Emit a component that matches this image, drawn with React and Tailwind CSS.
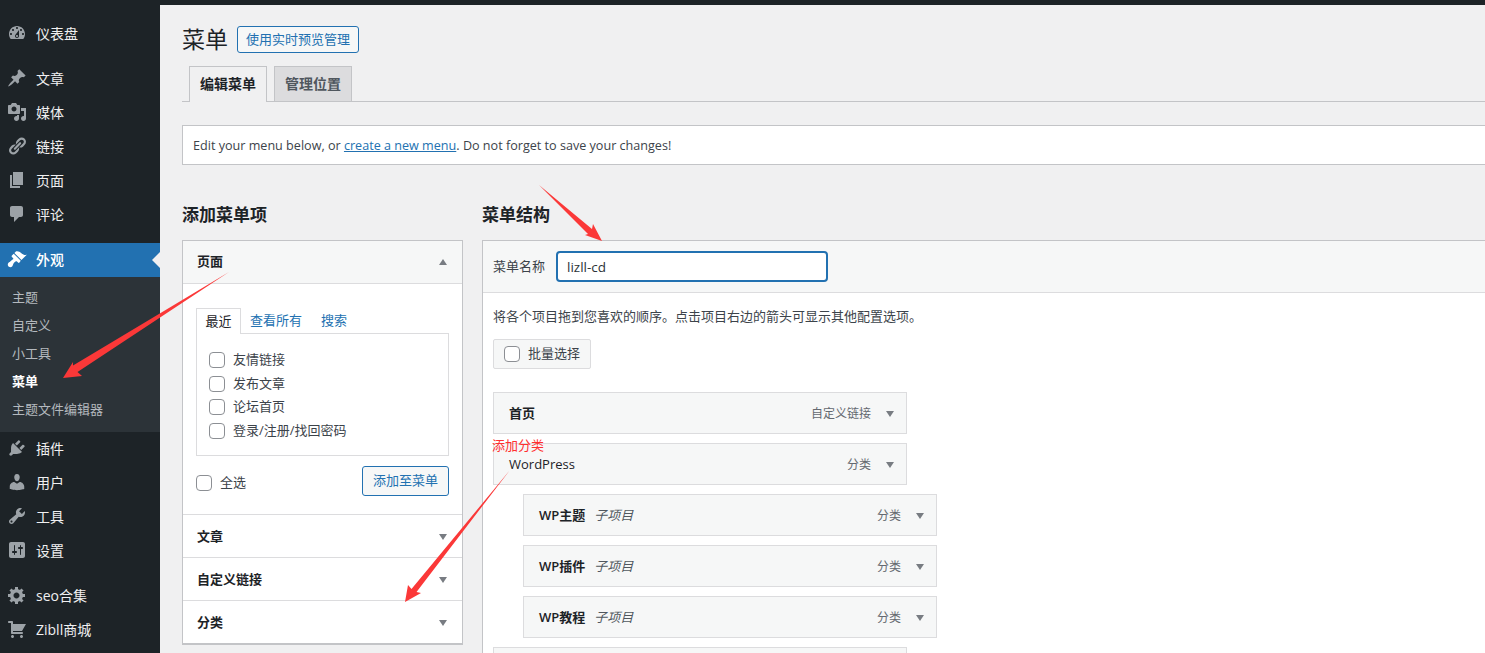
import React from 'react';

const icons = {
  dashboard: 'M3.76 16h12.48c1.1-1.37 1.76-3.11 1.76-5 0-4.42-3.58-8-8-8s-8 3.58-8 8c0 1.89.66 3.63 1.76 5zM10 4c.55 0 1 .45 1 1s-.45 1-1 1-1-.45-1-1 .45-1 1-1zM6 6c.55 0 1 .45 1 1s-.45 1-1 1-1-.45-1-1 .45-1 1-1zm8 0c.55 0 1 .45 1 1s-.45 1-1 1-1-.45-1-1 .45-1 1-1zm-5.37 5.55L12 7v6c0 1.1-.9 2-2 2s-2-.9-2-2c0-.57.24-1.08.63-1.45zM4 10c.55 0 1 .45 1 1s-.45 1-1 1-1-.45-1-1 .45-1 1-1zm12 0c.55 0 1 .45 1 1s-.45 1-1 1-1-.45-1-1 .45-1 1-1zm-5 3c0-.55-.45-1-1-1s-1 .45-1 1 .45 1 1 1 1-.45 1-1z',
  post: 'M10.44 3.02l1.82-1.82 6.36 6.35-1.83 1.82c-1.05-.68-2.48-.57-3.41.36l-.75.75c-.92.93-1.04 2.35-.35 3.41l-1.83 1.82-2.41-2.41-2.8 2.79c-.42.42-3.38 2.71-3.8 2.29s1.86-3.39 2.28-3.81l2.79-2.79L4.1 9.36l1.83-1.82c1.05.69 2.48.57 3.4-.36l.75-.75c.93-.92 1.05-2.35.36-3.41z',
  media: 'M13 11V4c0-.55-.45-1-1-1h-1.67L9 1H5L3.67 3H2c-.55 0-1 .45-1 1v7c0 .55.45 1 1 1h10c.55 0 1-.45 1-1zM7 4.5c1.38 0 2.5 1.12 2.5 2.5S8.38 9.5 7 9.5 4.5 8.38 4.5 7 5.62 4.5 7 4.5zM14 6h5v10.5c0 1.38-1.12 2.5-2.5 2.5S14 17.88 14 16.5s1.12-2.5 2.5-2.5c.17 0 .34.02.5.05V9h-3V6zm-4 8.05V13h2v3.5c0 1.38-1.12 2.5-2.5 2.5S7 17.88 7 16.5 8.12 14 9.5 14c.17 0 .34.02.5.05z',
  links: 'M17.74 2.76c1.68 1.69 1.68 4.41 0 6.1l-1.53 1.52c-1.12 1.12-2.7 1.47-4.14 1.09l2.62-2.61.76-.77.76-.76c.84-.84.84-2.2 0-3.04-.84-.85-2.2-.85-3.04 0l-.77.76-3.38 3.38c-.37-1.44-.02-3.02 1.1-4.14l1.52-1.53c1.69-1.68 4.42-1.68 6.1 0zM8.59 13.43l5.34-5.34c.42-.42.42-1.1 0-1.52-.44-.43-1.13-.39-1.53 0l-5.33 5.34c-.42.42-.42 1.1 0 1.52.44.43 1.13.39 1.52 0zm-.76 2.29l4.14-4.15c.38 1.44.03 3.02-1.09 4.14l-1.52 1.53c-1.69 1.68-4.41 1.68-6.1 0-1.68-1.68-1.68-4.42 0-6.1l1.53-1.52c1.12-1.12 2.7-1.47 4.14-1.1l-4.14 4.15c-.85.84-.85 2.2 0 3.05.84.84 2.2.84 3.04 0z',
  page: 'M6 15V2h10v13H6zm-1 1h8v2H3V5h2v11z',
  comments: 'M5 2h9c1.1 0 2 .9 2 2v7c0 1.1-.9 2-2 2h-2l-5 5v-5H5c-1.1 0-2-.9-2-2V4c0-1.1.9-2 2-2z',
  appearance: 'M14.48 11.06L7.41 3.99l1.5-1.5c.5-.56 2.3-.47 3.51.32 1.21.8 1.43 1.28 2.91 2.1 1.18.64 2.45 1.26 4.45.85zm-.71.71L6.7 4.7 4.93 6.47c-.39.39-.39 1.02 0 1.41l1.06 1.06c.39.39.39 1.03 0 1.42-.6.6-1.43 1.11-2.21 1.69-.35.26-.7.53-1.01.84C1.43 13.23.4 14.87.94 16.5c.5 1.5 2.83 2.36 4.14 1.06.58-.58 1.08-2.55 1.59-3.33.48-.73 1.1-1.38 1.9-1.8.45-.24.99-.3 1.42.11l1.06 1.06c.39.39 1.02.39 1.41 0z',
  plugins: 'M13.11 4.36L9.87 7.6 8 5.73l3.24-3.24c.35-.34 1.05-.2 1.56.32.52.51.66 1.21.31 1.55zm-8 1.77l.91-1.12 9.01 9.01-1.19.84c-.71.71-2.63 1.16-3.82 1.16H6.14L4.9 17.26c-.59.59-1.54.59-2.12 0-.59-.58-.59-1.53 0-2.12l1.24-1.24v-3.88c0-1.13.4-3.19 1.09-3.89zm7.26 3.97l3.24-3.24c.34-.35 1.04-.21 1.55.31.52.51.66 1.21.31 1.55l-3.24 3.25z',
  users: 'M10 9.25c-2.27 0-2.73-3.44-2.73-3.44C7 4.02 7.82 2 9.97 2c2.16 0 2.98 2.02 2.71 3.81 0 0-.41 3.44-2.68 3.44zm0 2.57L12.72 10c2.39 0 4.52 2.33 4.52 4.53v2.49s-3.65 1.13-7.24 1.13c-3.65 0-7.24-1.13-7.24-1.13v-2.49c0-2.25 1.94-4.48 4.47-4.48z',
  tools: 'M16.68 9.77c-1.34 1.34-3.3 1.67-4.95.99l-5.41 6.52c-.99.99-2.59.99-3.58 0s-.99-2.59 0-3.57l6.52-5.42c-.68-1.65-.35-3.61.99-4.95 1.28-1.28 3.12-1.62 4.72-1.06l-2.89 2.89 2.82 2.82 2.86-2.87c.53 1.58.18 3.39-1.08 4.65zM3.81 16.21c.4.39 1.04.39 1.43 0 .4-.4.4-1.04 0-1.43-.39-.4-1.03-.4-1.43 0-.39.39-.39 1.03 0 1.43z',
  settings: 'M18 16V4c0-1.1-.9-2-2-2H4c-1.1 0-2 .9-2 2v12c0 1.1.9 2 2 2h12c1.1 0 2-.9 2-2zM8 11h1c.55 0 1 .45 1 1s-.45 1-1 1H8v1.5c0 .28-.22.5-.5.5s-.5-.22-.5-.5V13H6c-.55 0-1-.45-1-1s.45-1 1-1h1V5.5c0-.28.22-.5.5-.5s.5.22.5.5V11zm5-2h-1c-.55 0-1-.45-1-1s.45-1 1-1h1V5.5c0-.28.22-.5.5-.5s.5.22.5.5V7h1c.55 0 1 .45 1 1s-.45 1-1 1h-1v5.5c0 .28-.22.5-.5.5s-.5-.22-.5-.5V9z',
  gear: 'M18 12h-2.18c-.17.7-.44 1.35-.81 1.93l1.54 1.54-2.1 2.1-1.54-1.54c-.58.36-1.23.63-1.91.79V19H8v-2.18c-.68-.16-1.33-.43-1.91-.79l-1.54 1.54-2.12-2.12 1.54-1.54c-.36-.58-.63-1.23-.79-1.91H1V9.03h2.17c.16-.7.44-1.35.8-1.94L2.43 5.55l2.1-2.1 1.54 1.54c.58-.37 1.24-.64 1.93-.81V2h3v2.18c.68.16 1.33.43 1.91.79l1.54-1.54 2.12 2.12-1.54 1.54c.36.59.64 1.24.8 1.94H18V12zm-8.5 1.5c1.66 0 3-1.34 3-3s-1.34-3-3-3-3 1.34-3 3 1.34 3 3 3z',
  cart: 'M6 13h9c.55 0 1 .45 1 1s-.45 1-1 1H5c-.55 0-1-.45-1-1V4H2c-.55 0-1-.45-1-1s.45-1 1-1h3c.55 0 1 .45 1 1v2h13l-4 7H6v1zm-.5 3c.83 0 1.5.67 1.5 1.5S6.33 19 5.5 19 4 18.33 4 17.5 4.67 16 5.5 16zm9 0c.83 0 1.5.67 1.5 1.5s-.67 1.5-1.5 1.5-1.5-.67-1.5-1.5.67-1.5 1.5-1.5z'
};

const Dashicon = ({ name, className }) => (
  <svg viewBox="0 0 20 20" fill="currentColor" className={className}>
    <path d={icons[name]} />
  </svg>
);

const MenuItem = ({ icon, label }) => (
  <div className="flex items-center h-[34px] pl-[7px] gap-[9px] text-[14px] text-[#f0f0f1]">
    <Dashicon name={icon} className="w-5 h-5 text-[#9ca2a7]" />
    <span>{label}</span>
  </div>
);

const Triangle = ({ up }) => (
  <svg viewBox="0 0 8 6" className="w-2 h-[6px] text-[#787c82]" fill="currentColor">
    <path d={up ? 'M4 0l4 6H0z' : 'M0 0h8L4 6z'} />
  </svg>
);

const Checkbox = () => (
  <span className="block w-4 h-4 shrink-0 bg-white border border-[#8c8f94] rounded-[4px]" />
);

const Section = ({ title }) => (
  <div className="flex items-center justify-between h-[43px] pt-[2px] pl-[14px] pr-[15px] bg-white border-t border-[#dcdcde]">
    <span className="font-semibold text-[#1d2327]">{title}</span>
    <Triangle />
  </div>
);

const MenuRow = ({ title, type, sub, bold = true }) => (
  <div className={`flex items-center justify-between w-[414px] h-[42px] pt-[2px] pl-[15px] pr-[12px] mb-[9px] bg-[#f6f7f7] border border-[#dcdcde] ${sub ? 'ml-[30px]' : ''}`}>
    <span className="flex items-center gap-[9px] text-[#1d2327]">
      <span className={bold ? 'font-semibold' : ''}>{title}</span>
      {sub && <em className="text-[#50575e]">子项目</em>}
    </span>
    <span className="flex items-center gap-[15px] text-[12px] text-[#646970]">
      {type}
      <Triangle />
    </span>
  </div>
);

const App = () => (
  <div className="relative w-[1485px] h-[653px] overflow-hidden bg-[#f0f0f1] text-[13px] text-[#3c434a] font-['Open_Sans','Noto_Sans_CJK_SC',sans-serif]">
    <div className="h-[5px] bg-[#1d2327]" />
    <div className="flex h-[648px]">
      {/* sidebar */}
      <div className="w-40 shrink-0 bg-[#1d2327] pt-[11px]">
        <MenuItem icon="dashboard" label="仪表盘" />
        <div className="h-[11px]" />
        <MenuItem icon="post" label="文章" />
        <MenuItem icon="media" label="媒体" />
        <MenuItem icon="links" label="链接" />
        <MenuItem icon="page" label="页面" />
        <MenuItem icon="comments" label="评论" />
        <div className="h-3" />
        <div className="relative flex items-center h-[34px] pb-[2px] pl-[7px] gap-[9px] text-[14px] font-medium text-white bg-[#2271b1]">
          <Dashicon name="appearance" className="w-5 h-5" />
          <span>外观</span>
          <span className="absolute right-0 top-[9px] border-y-[8px] border-r-[8px] border-y-transparent border-r-[#f0f0f1]" />
        </div>
        <div className="bg-[#2c3338] pt-[7px] pb-2 -mb-px text-[13px] text-[#b4b9be]">
          <div className="flex items-center h-7 pl-3">主题</div>
          <div className="flex items-center h-7 pl-3">自定义</div>
          <div className="flex items-center h-7 pl-3">小工具</div>
          <div className="flex items-center h-7 pl-3 font-semibold text-white">菜单</div>
          <div className="flex items-center h-7 pl-3">主题文件编辑器</div>
        </div>
        <MenuItem icon="plugins" label="插件" />
        <MenuItem icon="users" label="用户" />
        <MenuItem icon="tools" label="工具" />
        <MenuItem icon="settings" label="设置" />
        <div className="h-[11px]" />
        <MenuItem icon="gear" label="seo合集" />
        <MenuItem icon="cart" label="Zibll商城" />
      </div>

      {/* main */}
      <div className="w-[1400px] shrink-0 pl-[22px]">
        <div className="flex items-center gap-[9px] pt-[21px]">
          <h1 className="text-[23px] leading-[27px] text-[#1d2327]">菜单</h1>
          <span className="flex items-center h-[27px] px-2 text-[13px] text-[#2271b1] bg-[#f6f7f7] border border-[#2271b1] rounded-[3px]">使用实时预览管理</span>
        </div>
        <div className="flex gap-[7px] mt-[13px] pl-[7px] h-9 border-b border-[#c3c4c7]">
          <div className="flex items-center justify-center w-[78px] h-9 pb-[2px] text-[14px] font-semibold text-[#1d2327] bg-[#f0f0f1] border border-b-0 border-[#c3c4c7]">编辑菜单</div>
          <div className="flex items-center justify-center w-[78px] h-[35px] pb-px text-[14px] font-semibold text-[#50575e] bg-[#dcdcde] border border-b-0 border-[#c3c4c7]">管理位置</div>
        </div>
        <div className="flex items-center h-10 mt-[23px] pl-[10px] pt-[2px] bg-white border border-[#c3c4c7]">
          <span className="text-[12.6px]">Edit your menu below, or <span className="text-[#2271b1] underline">create a new menu</span>. Do not forget to save your changes!</span>
        </div>

        <div className="flex gap-[19px] mt-[38px]">
          {/* left column */}
          <div className="w-[281px] shrink-0">
            <h2 className="text-[17px] leading-6 font-bold text-[#1d2327] mb-[13px]">添加菜单项</h2>
            <div className="bg-white border border-[#c3c4c7] border-b-2">
              <div className="flex items-center justify-between h-[43px] pl-[14px] pr-[15px] bg-[#f6f7f7] border-b border-[#dcdcde]">
                <span className="font-semibold text-[#1d2327]">页面</span>
                <Triangle up />
              </div>
              <div className="px-[13px] pt-[23px] pb-[18px]">
                <div className="flex items-end h-[26px]">
                  <span className="relative z-10 flex items-center justify-center w-[45px] h-[26px] -mb-px text-[#1d2327] bg-white border border-b-0 border-[#dcdcde]">最近</span>
                  <span className="ml-[9px] h-[22px] text-[#2271b1]">查看所有</span>
                  <span className="ml-[19px] h-[22px] text-[#2271b1]">搜索</span>
                </div>
                <div className="h-[123px] pt-[14px] pl-[12px] border border-[#dcdcde]">
                  {['友情链接', '发布文章', '论坛首页', '登录/注册/找回密码'].map(label => (
                    <div key={label} className="flex items-center gap-2 h-[23.7px]">
                      <Checkbox />
                      <span>{label}</span>
                    </div>
                  ))}
                </div>
                <div className="flex items-center justify-between mt-[10px]">
                  <div className="flex items-center gap-2 pt-[4px]">
                    <Checkbox />
                    <span>全选</span>
                  </div>
                  <span className="flex items-center justify-center w-[87px] h-[30px] text-[#2271b1] bg-[#f6f7f7] border border-[#2271b1] rounded-[3px]">添加至菜单</span>
                </div>
              </div>
              <Section title="文章" />
              <Section title="自定义链接" />
              <Section title="分类" />
            </div>
          </div>

          {/* right column */}
          <div className="flex-1">
            <h2 className="text-[17px] leading-6 font-bold text-[#1d2327] mb-[13px]">菜单结构</h2>
            <div className="bg-white border border-[#c3c4c7] h-[500px]">
              <div className="flex items-center h-[52px] pl-[10px] gap-[11px] bg-[#f6f7f7] border-b border-[#dcdcde]">
                <span>菜单名称</span>
                <span className="flex items-center w-[272px] h-[31px] pl-[9px] pt-px text-[13.5px] text-[#2c3338] bg-white border-2 border-[#2271b1] rounded-[4px]">lizll-cd</span>
              </div>
              <div className="pl-[10px]">
                <p className="mt-[13px] leading-[20px]">将各个项目拖到您喜欢的顺序。点击项目右边的箭头可显示其他配置选项。</p>
                <div className="flex items-center gap-2 w-[98px] h-[30px] mt-[13px] pl-[10px] bg-[#f6f7f7] border border-[#dcdcde] rounded-[2px]">
                  <Checkbox />
                  <span>批量选择</span>
                </div>
                <div className="mt-[23px]">
                  <MenuRow title="首页" type="自定义链接" />
                  <MenuRow title="WordPress" type="分类" bold={false} />
                  <MenuRow title="WP主题" type="分类" sub />
                  <MenuRow title="WP插件" type="分类" sub />
                  <MenuRow title="WP教程" type="分类" sub />
                  <MenuRow title="" type="" />
                </div>
              </div>
            </div>
          </div>
        </div>
      </div>
    </div>

    {/* red annotations drawn over the screenshot */}
    <span className="absolute left-[492px] top-[436px] text-[13px] leading-[18px] text-[#ff2f2f]">添加分类</span>
    <svg className="absolute inset-0 pointer-events-none" width="1485" height="653" viewBox="0 0 1485 653">
      <g fill="#fb3838">
        <path d="M229 272L73 365.500 73 362 63 378 82 376 77.500 372z" />
        <path d="M539 185L588 234 585 235 602 241 593 224 592 229z" />
        <path d="M510 470L411.500 589 408 585 405 602 421 593 416.500 592z" />
      </g>
    </svg>
  </div>
);

export default App;
